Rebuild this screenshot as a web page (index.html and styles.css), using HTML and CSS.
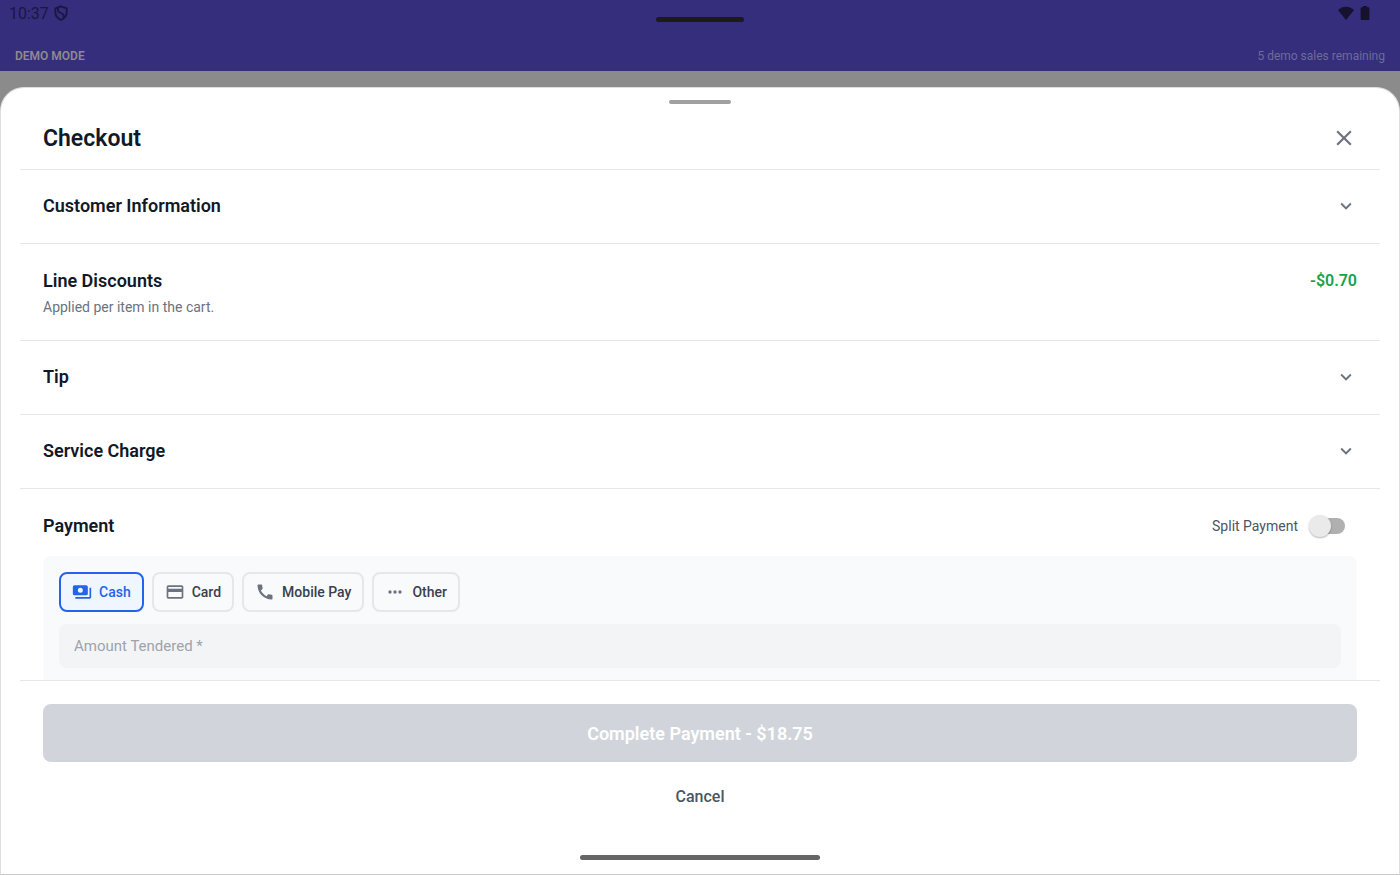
FILE: index.html
```
<!DOCTYPE html>
<html lang="en">
<head>
    <meta charset="UTF-8">
    <meta name="viewport" content="width=device-width, initial-scale=1.0">
    <title>Checkout</title>
    <link rel="stylesheet" href="styles.css">
</head>
<body>

    <header class="top">
        <div class="status-bar">
            <span class="time">10:37</span>
            <svg class="shield" viewBox="0 0 24 24" fill="none" stroke="currentColor" stroke-width="2.8">
                <path d="M12 2 L20.5 5 V11 C20.5 16.500 17 20.500 12 22.500 C7 20.500 3.500 16.500 3.500 11 V5 Z"/>
                <path d="M7.500 4 V8 C7.500 12.500 16 11.500 16 16 V19.500"/>
            </svg>
            <span class="status-icons">
                <svg class="wifi" viewBox="0 0 16 14" fill="currentColor"><path d="M8 14 L0 4 C4.500 -0.500 11.500 -0.500 16 4 Z"/></svg>
                <svg class="battery" viewBox="0 0 10 14" fill="currentColor"><path d="M3 0 H7 V1.300 H8.200 Q9.400 1.300 9.400 2.500 V12.800 Q9.400 14 8.200 14 H1.800 Q0.600 14 0.600 12.800 V2.500 Q0.600 1.300 1.800 1.300 H3 Z"/></svg>
            </span>
        </div>
        <div class="demo-bar">
            <strong>DEMO MODE</strong>
            <span>5 demo sales remaining</span>
        </div>
        <span class="window-handle"></span>
    </header>

    <main class="sheet">
        <span class="grabber"></span>
        <div class="sheet-header">
            <h1>Checkout</h1>
            <button class="icon-button" type="button" aria-label="Close">
                <svg class="close-icon" viewBox="0 0 24 24" fill="currentColor"><path d="M19 6.410L17.590 5 12 10.590 6.410 5 5 6.410 10.590 12 5 17.590 6.410 19 12 13.410 17.590 19 19 17.590 13.410 12z"/></svg>
            </button>
        </div>

        <div class="sections">
            <button class="row" type="button" aria-expanded="false">
                <span class="row-title">Customer Information</span>
                <svg class="chevron" viewBox="0 0 24 24" fill="currentColor"><path d="M7.410 8.580L12 13.170l4.590-4.590L18 10l-6 6-6-6z"/></svg>
            </button>

            <section class="discounts">
                <div class="discount-line">
                    <h2 class="row-title">Line Discounts</h2>
                    <span class="amount">-$0.70</span>
                </div>
                <p>Applied per item in the cart.</p>
            </section>

            <button class="row" type="button" aria-expanded="false">
                <span class="row-title">Tip</span>
                <svg class="chevron" viewBox="0 0 24 24" fill="currentColor"><path d="M7.410 8.580L12 13.170l4.590-4.590L18 10l-6 6-6-6z"/></svg>
            </button>

            <button class="row" type="button" aria-expanded="false">
                <span class="row-title">Service Charge</span>
                <svg class="chevron" viewBox="0 0 24 24" fill="currentColor"><path d="M7.410 8.580L12 13.170l4.590-4.590L18 10l-6 6-6-6z"/></svg>
            </button>

            <section class="payment">
                <div class="payment-header">
                    <h2 class="row-title">Payment</h2>
                    <label class="split" for="splitPayment">Split Payment
                        <input class="switch" type="checkbox" id="splitPayment">
                    </label>
                </div>
                <div class="panel">
                    <div class="methods">
                        <button class="method selected" type="button">
                            <svg viewBox="0 0 24 24" fill="currentColor"><path fill-rule="evenodd" d="M3 4 H17 Q19 4 19 6 V14 Q19 16 17 16 H3 Q1 16 1 14 V6 Q1 4 3 4 Z M10 7 A3 3 0 1 0 10 13 A3 3 0 1 0 10 7 Z"/><path d="M23 7 V18 Q23 20 21 20 H4 V18 H21 V7 Z"/></svg>
                            Cash
                        </button>
                        <button class="method" type="button">
                            <svg viewBox="0 0 24 24" fill="currentColor"><path d="M20 4H4c-1.110 0-1.990.890-1.990 2L2 18c0 1.110.890 2 2 2h16c1.110 0 2-.890 2-2V6c0-1.110-.890-2-2-2zm0 14H4v-6h16v6zm0-10H4V6h16v2z"/></svg>
                            Card
                        </button>
                        <button class="method" type="button">
                            <svg viewBox="0 0 24 24" fill="currentColor"><path d="M20.010 15.380c-1.230 0-2.420-.200-3.530-.560-.350-.120-.740-.030-1.010.240l-1.570 1.970c-2.830-1.350-5.480-3.900-6.890-6.830l1.950-1.660c.270-.280.350-.670.240-1.020-.370-1.110-.560-2.300-.560-3.530 0-.540-.450-.990-.990-.990H4.190C3.650 3 3 3.240 3 3.990 3 13.280 10.730 21 20.010 21c.710 0 .990-.630.990-1.180v-3.450c0-.540-.450-.990-.990-.990z"/></svg>
                            Mobile Pay
                        </button>
                        <button class="method" type="button">
                            <svg viewBox="0 0 24 24" fill="currentColor"><circle cx="6" cy="12" r="2"/><circle cx="12" cy="12" r="2"/><circle cx="18" cy="12" r="2"/></svg>
                            Other
                        </button>
                    </div>
                    <input class="tendered" type="text" inputmode="decimal" placeholder="Amount Tendered *" aria-label="Amount Tendered">
                </div>
            </section>
        </div>

        <footer class="actions">
            <button class="complete" type="button" disabled>Complete Payment - $18.75</button>
            <button class="cancel" type="button">Cancel</button>
        </footer>
    </main>

    <span class="home-bar"></span>

</body>
</html>
```

FILE: styles.css
```
* {
    box-sizing: border-box;
}
body {
    margin: 0;
    height: 100vh;
    display: flex;
    flex-direction: column;
    background: #8b8b8b;
    color: #111827;
    font-family: Roboto, sans-serif;
    font-size: 14px;
}
h1, h2, p {
    margin: 0;
}
button, input {
    font-family: inherit;
    color: inherit;
}
button {
    border: none;
    background: none;
    padding: 0;
    cursor: pointer;
}
svg {
    display: block;
    flex: none;
}
.top {
    position: relative;
    flex: none;
    height: 71px;
    display: flex;
    flex-direction: column;
    justify-content: space-between;
    background: #342e7d;
}
.status-bar {
    display: flex;
    align-items: center;
    height: 26px;
    padding: 0 30px 0 9px;
    color: #1b1740;
    font-size: 16px;
}
.shield {
    width: 16px;
    height: 16px;
    margin-left: 4px;
}
.status-icons {
    display: flex;
    gap: 6px;
    margin-left: auto;
    color: #15112f;
}
.wifi {
    width: 16px;
    height: 14px;
}
.battery {
    width: 10px;
    height: 14px;
}
.demo-bar {
    display: flex;
    align-items: center;
    justify-content: space-between;
    height: 31px;
    padding: 0 15px;
    color: #6f6b9a;
    font-size: 12px;
}
.demo-bar strong {
    color: #8d8b8d;
    font-weight: 600;
}
.window-handle {
    position: absolute;
    top: 17px;
    left: 50%;
    width: 88px;
    height: 5px;
    margin-left: -44px;
    border-radius: 3px;
    background: #1c1c17;
}
.sheet {
    flex: 1;
    min-height: 0;
    display: flex;
    flex-direction: column;
    margin-top: 16px;
    padding: 0 19px;
    border: 1px solid #dedede;
    border-bottom-color: #c8c8c8;
    border-radius: 24px 24px 0 0;
    background: #fff;
}
.grabber {
    flex: none;
    align-self: center;
    width: 62px;
    height: 4px;
    margin-top: 12px;
    border-radius: 2px;
    background: #a0a0a0;
}
.sheet-header {
    flex: none;
    display: flex;
    align-items: center;
    justify-content: space-between;
    height: 66px;
    padding: 3px 23px 0;
    border-bottom: 1px solid #e5e7eb;
}
h1 {
    font-size: 23px;
    font-weight: 600;
}
.icon-button {
    color: #6b7280;
}
.close-icon {
    width: 26px;
    height: 26px;
}
.sections {
    flex: 1;
    min-height: 0;
    overflow-y: auto;
    scrollbar-width: none;
}
.row {
    display: flex;
    align-items: center;
    justify-content: space-between;
    width: 100%;
    height: 74px;
    padding: 0 23px 1px;
    border-bottom: 1px solid #e5e7eb;
}
.row-title {
    font-size: 18px;
    line-height: 24px;
    font-weight: 600;
}
.chevron {
    width: 22px;
    height: 22px;
    color: #6b7280;
}
.discounts {
    height: 97px;
    padding: 25px 23px 0;
    border-bottom: 1px solid #e5e7eb;
}
.discount-line {
    display: flex;
    justify-content: space-between;
}
.discounts p {
    margin-top: 4px;
    color: #6b7280;
    line-height: 20px;
}
.amount {
    color: #16a34a;
    font-size: 16px;
    line-height: 24px;
    font-weight: 600;
}
.payment {
    padding: 22px 23px 16px;
}
.payment-header {
    display: flex;
    align-items: center;
    justify-content: space-between;
    height: 30px;
}
.split {
    display: flex;
    align-items: center;
    gap: 13px;
    padding-right: 12px;
    color: #4b5563;
}
.switch {
    appearance: none;
    position: relative;
    width: 34px;
    height: 16px;
    margin: 0;
    border-radius: 8px;
    background: #b0b0b0;
}
.switch::before {
    content: "";
    position: absolute;
    top: -3px;
    left: -2px;
    width: 22px;
    height: 22px;
    border-radius: 50%;
    background: #eaeaea;
    box-shadow: 0 1px 2px rgba(0, 0, 0, 0.3);
}
.switch:checked::before {
    left: 14px;
}
.panel {
    margin-top: 15px;
    padding: 16px;
    border-radius: 8px;
    background: #f9fafb;
}
.methods {
    display: flex;
    gap: 8px;
}
.method {
    display: flex;
    align-items: center;
    gap: 7px;
    height: 40px;
    padding: 0 11px;
    border: 2px solid #e5e7eb;
    border-radius: 8px;
    color: #374151;
    font-size: 14px;
    font-weight: 500;
}
.method svg {
    width: 20px;
    height: 20px;
    color: #6b7280;
}
.selected {
    border-color: #2563eb;
    background: #eff6ff;
}
.selected, .selected svg {
    color: #2563eb;
}
.tendered {
    display: block;
    width: 100%;
    height: 44px;
    margin-top: 12px;
    padding: 0 15px;
    border: none;
    border-radius: 8px;
    background: #f3f4f6;
    font-size: 15px;
}
.tendered::placeholder {
    color: #9ca3af;
}
.actions {
    flex: none;
    display: flex;
    flex-direction: column;
    align-items: center;
    height: 194px;
    padding: 23px 23px 0;
    border-top: 1px solid #e5e7eb;
}
.complete {
    width: 100%;
    height: 58px;
    border-radius: 8px;
    background: #d1d5db;
    color: #fff;
    font-size: 18px;
    font-weight: 600;
}
.cancel {
    height: 40px;
    margin-top: 14px;
    padding: 0 16px;
    color: #4b5563;
    font-size: 16px;
    font-weight: 500;
}
.home-bar {
    position: fixed;
    bottom: 15px;
    left: 50%;
    width: 240px;
    height: 5px;
    margin-left: -120px;
    border-radius: 3px;
    background: #666;
}
```
